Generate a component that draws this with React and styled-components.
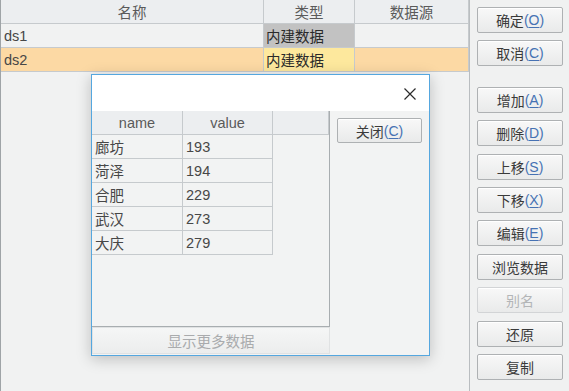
import styled, { createGlobalStyle } from 'styled-components';

const GlobalStyle = createGlobalStyle`
  html, body {
    margin: 0;
    padding: 0;
    background: #f0f1f1;
  }
  body {
    font-family: "Liberation Sans", "Noto Sans CJK SC", sans-serif;
    font-size: 14px;
    color: #333;
  }
`;

const sources = [
  { name: 'ds1', type: '内建数据', source: '', selected: false },
  { name: 'ds2', type: '内建数据', source: '', selected: true },
];

const preview = [
  { name: '廊坊', value: 193 },
  { name: '菏泽', value: 194 },
  { name: '合肥', value: 229 },
  { name: '武汉', value: 273 },
  { name: '大庆', value: 279 },
];

const actions = [
  { label: '确定', key: 'O' },
  { label: '取消', key: 'C' },
  { label: '增加', key: 'A', spaced: true },
  { label: '删除', key: 'D' },
  { label: '上移', key: 'S' },
  { label: '下移', key: 'X' },
  { label: '编辑', key: 'E' },
  { label: '浏览数据' },
  { label: '别名', disabled: true },
  { label: '还原' },
  { label: '复制' },
];

const Label = ({ text, mnemonic }) => (
  <>
    {text}
    {mnemonic && (
      <Mnemonic>
        (<u>{mnemonic}</u>)
      </Mnemonic>
    )}
  </>
);

const App = () => {
  return (
    <Page>
      <GlobalStyle />
      <ListPanel>
        <SourceRow header>
          <HeadCell>名称</HeadCell>
          <HeadCell>类型</HeadCell>
          <HeadCell>数据源</HeadCell>
        </SourceRow>
        {sources.map((s) => (
          <SourceRow key={s.name} selected={s.selected}>
            <Cell>{s.name}</Cell>
            <TypeCell selected={s.selected}>{s.type}</TypeCell>
            <Cell>{s.source}</Cell>
          </SourceRow>
        ))}
      </ListPanel>

      <ButtonColumn>
        {actions.map((a) => (
          <SideButton key={a.label} spaced={a.spaced} disabled={a.disabled}>
            <Label text={a.label} mnemonic={a.key} />
          </SideButton>
        ))}
      </ButtonColumn>

      <Dialog>
        <TitleBar>
          <CloseIcon width="14" height="14" viewBox="0 0 14 14">
            <path d="M1.5 1.5 L12.5 12.5 M12.5 1.5 L1.5 12.5" stroke="#2b2b2b" strokeWidth="1.2" fill="none" />
          </CloseIcon>
        </TitleBar>
        <DialogBody>
          <PreviewColumn>
            <PreviewTable>
              <PreviewRow>
                <HeadCell>name</HeadCell>
                <HeadCell>value</HeadCell>
                <HeadCell />
              </PreviewRow>
              {preview.map((p) => (
                <PreviewRow key={p.name}>
                  <Cell>{p.name}</Cell>
                  <Cell>{p.value}</Cell>
                </PreviewRow>
              ))}
            </PreviewTable>
            <MoreButton disabled>显示更多数据</MoreButton>
          </PreviewColumn>
          <DialogSide>
            <CloseButton>
              <Label text="关闭" mnemonic="C" />
            </CloseButton>
          </DialogSide>
        </DialogBody>
      </Dialog>
    </Page>
  );
};

const Page = styled.div`
  position: relative;
  display: flex;
  width: 569px;
  height: 391px;
  overflow: hidden;
  background: #f0f1f1;
`;

const ListPanel = styled.div`
  width: 468px;
  height: 391px;
  border-left: 1px solid #9fa4a7;
  border-right: 1px solid #b9bdc0;
  background: #f1f2f2;
`;

const SourceRow = styled.div`
  display: grid;
  grid-template-columns: 263px 91px 1fr;
  height: 24px;
  background: ${({ header, selected }) => (header ? '#eceef0' : selected ? '#fcd9a4' : '#f1f2f2')};
`;

const HeadCell = styled.div`
  display: flex;
  align-items: center;
  justify-content: center;
  border-right: 1px solid #c6cacd;
  border-bottom: 1px solid #c6cacd;
  background: #eceef0;
  color: #5a5a5a;
  font-size: 14.5px;
`;

const Cell = styled.div`
  display: flex;
  align-items: center;
  padding-left: 3px;
  border-right: 1px solid #c6cacd;
  border-bottom: 1px solid #c6cacd;
  color: #474747;
  font-size: 14.5px;
  white-space: nowrap;
`;

const TypeCell = styled(Cell)`
  padding-left: 2px;
  background: ${({ selected }) => (selected ? '#fde89d' : '#c2c2c2')};
  color: #2a2a2a;
`;

const ButtonColumn = styled.div`
  display: flex;
  flex-direction: column;
  gap: 7.4px;
  padding: 7px 0 0 7px;
`;

const SideButton = styled.div`
  display: flex;
  align-items: center;
  justify-content: center;
  box-sizing: border-box;
  width: 86px;
  height: 26px;
  margin-top: ${({ spaced }) => (spaced ? '13px' : '0')};
  border: 1px solid ${({ disabled }) => (disabled ? '#d2d4d6' : '#aeb1b3')};
  border-radius: 2px;
  background: linear-gradient(#f8f8f8, #e9eaea);
  box-shadow: inset 0 1px 0 #ffffff;
  color: ${({ disabled }) => (disabled ? '#b3b5b7' : '#3a3a3a')};
  font-size: 14px;
  cursor: pointer;
`;

const Mnemonic = styled.span`
  color: #4672b3;
  u {
    text-underline-offset: 2px;
  }
`;

const Dialog = styled.div`
  position: absolute;
  left: 91px;
  top: 74px;
  width: 337px;
  height: 280px;
  display: flex;
  flex-direction: column;
  border: 1px solid #55a7df;
  background: #f2f3f3;
  box-shadow: 0 3px 14px rgba(0, 0, 0, 0.22);
`;

const TitleBar = styled.div`
  display: flex;
  align-items: center;
  justify-content: flex-end;
  height: 36px;
  padding-right: 12px;
  background: #ffffff;
`;

const CloseIcon = styled.svg`
  display: block;
  margin-top: 1px;
`;

const DialogBody = styled.div`
  flex: 1;
  display: flex;
`;

const PreviewColumn = styled.div`
  display: flex;
  flex-direction: column;
  width: 238px;
`;

const PreviewTable = styled.div`
  height: 215px;
  border-right: 1px solid #a8adb0;
  border-bottom: 1px solid #a8adb0;
  background: #f2f3f3;
`;

const PreviewRow = styled.div`
  display: grid;
  grid-template-columns: 91px 90px 56px;
  height: 24px;
`;

const MoreButton = styled.div`
  display: flex;
  align-items: center;
  justify-content: center;
  height: 27px;
  box-sizing: border-box;
  border: 1px solid #e0e2e3;
  background: linear-gradient(#f5f6f6, #eceded);
  color: #a9abad;
  font-size: 14.5px;
`;

const DialogSide = styled.div`
  padding: 7px 0 0 7px;
`;

const CloseButton = styled(SideButton)`
  width: 85px;
  height: 25px;
`;

export default App;
